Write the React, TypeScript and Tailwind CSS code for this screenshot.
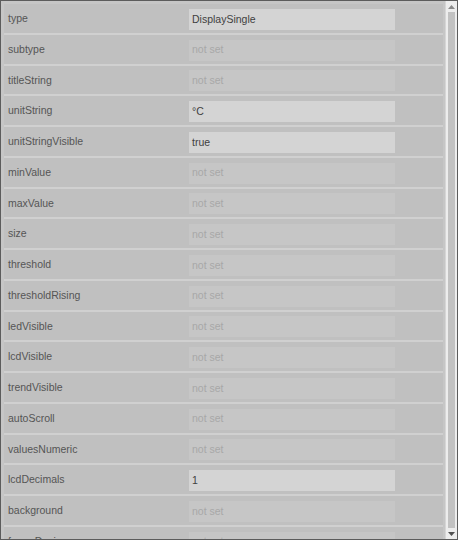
const PROPS: { name: string; value?: string }[] = [
  { name: "type", value: "DisplaySingle" },
  { name: "subtype" },
  { name: "titleString" },
  { name: "unitString", value: "°C" },
  { name: "unitStringVisible", value: "true" },
  { name: "minValue" },
  { name: "maxValue" },
  { name: "size" },
  { name: "threshold" },
  { name: "thresholdRising" },
  { name: "ledVisible" },
  { name: "lcdVisible" },
  { name: "trendVisible" },
  { name: "autoScroll" },
  { name: "valuesNumeric" },
  { name: "lcdDecimals", value: "1" },
  { name: "background" },
  { name: "frameDesign" },
];

const Row = ({ name, value }: { name: string; value?: string }) => (
  <div className="flex items-center h-[30.75px] shrink-0 bg-[#c0c0c0] border-b-2 border-[#d0d0d0]">
    <div className="w-[185px] pl-[4px] pt-[1px] text-[10.5px] text-[#555555]">{name}</div>
    <div
      className={
        "w-[206px] h-[21px] mt-[2px] flex items-center px-[3px] text-[10.5px] " +
        (value ? "bg-[#d4d4d4] text-[#3f3f3f]" : "bg-[#c6c6c6] text-[#a8a8a8]")
      }
    >
      {value ?? "not set"}
    </div>
  </div>
);

export default function App() {
  return (
    <div
      className="w-[458px] h-[540px] flex border border-[#5c5c5c] bg-[#c6c6c6] overflow-hidden"
      style={{ fontFamily: '"Liberation Sans", Arial, sans-serif' }}
    >
      <div className="flex-1 flex flex-col pl-[3px] pt-[3px] pr-[2px] overflow-hidden">
        {PROPS.map((p) => (
          <Row key={p.name} name={p.name} value={p.value} />
        ))}
      </div>
      <div className="w-[12px] flex flex-col bg-[#ededed] border-l border-[#d6d6d6]">
        <div className="h-[11px] flex items-center justify-center">
          <svg width="7" height="4" viewBox="0 0 7 4">
            <path d="M3.5 0 L7 4 L0 4 Z" fill="#8a8a8a" />
          </svg>
        </div>
        <div className="flex-1 mx-[2px] bg-[#c2c2c2]" />
        <div className="h-[11px] flex items-center justify-center">
          <svg width="7" height="4" viewBox="0 0 7 4">
            <path d="M0 0 L7 0 L3.5 4 Z" fill="#505050" />
          </svg>
        </div>
      </div>
    </div>
  );
}
